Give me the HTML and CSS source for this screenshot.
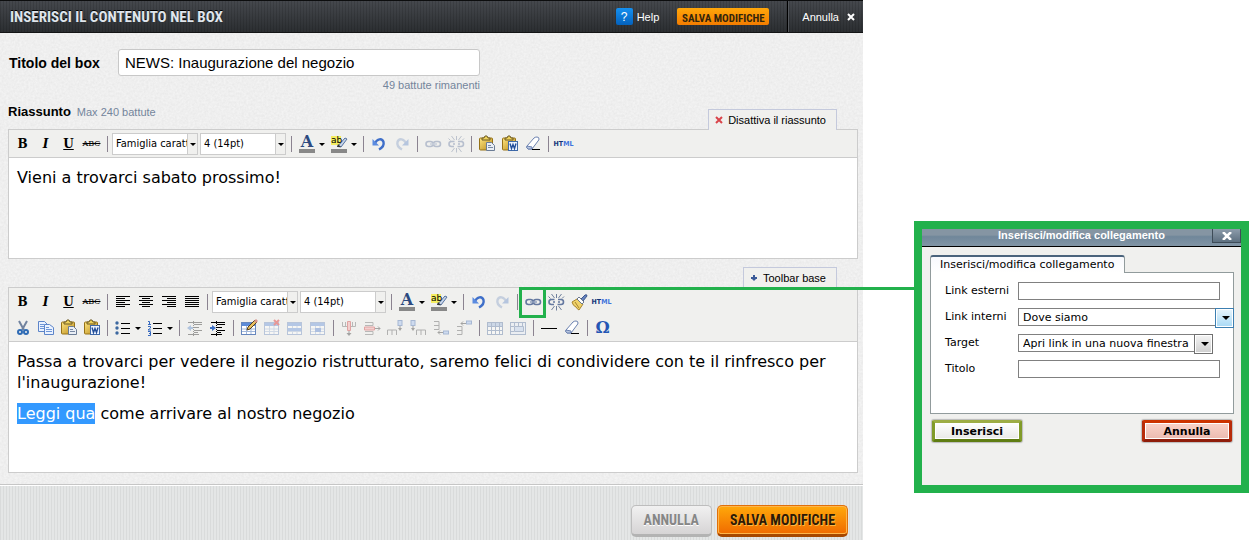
FILE: index.html
```html
<!DOCTYPE html>
<html lang="it">
<head>
<meta charset="utf-8">
<title>Inserisci il contenuto nel box</title>
<link rel="stylesheet" href="styles.css">
</head>
<body>
<svg class="sprite" aria-hidden="true">
  <defs>
    <linearGradient id="gold" x1="0" y1="0" x2="1" y2="1"><stop offset="0" stop-color="#ffe680"/><stop offset="1" stop-color="#b98a1c"/></linearGradient>
  </defs>
  <symbol id="i-lines-left" viewBox="0 0 20 20"><path d="M3 4.500h14M3 6.500h9M3 8.500h14M3 10.500h9M3 12.500h14M3 14.500h9" stroke="#000"/></symbol>
  <symbol id="i-lines-center" viewBox="0 0 20 20"><path d="M3 4.500h14M6 6.500h8M3 8.500h14M6 10.500h8M3 12.500h14M6 14.500h8" stroke="#000"/></symbol>
  <symbol id="i-lines-right" viewBox="0 0 20 20"><path d="M3 4.500h14M8 6.500h9M3 8.500h14M8 10.500h9M3 12.500h14M8 14.500h9" stroke="#000"/></symbol>
  <symbol id="i-lines-full" viewBox="0 0 20 20"><path d="M3 4.500h14M3 6.500h14M3 8.500h14M3 10.500h14M3 12.500h14M3 14.500h14" stroke="#000"/></symbol>
  <symbol id="i-pen" viewBox="0 0 20 20"><path d="M2 2h10v9H2z" fill="#f5ee62"/><path d="M8.500 12.500L16 4l2 1-6 8z" fill="#c8d4e8" stroke="#5573a0"/><path d="M8 13l1-3 3 3z" fill="#333"/><path d="M2 15h16v4H2z" fill="#888"/></symbol>
  <symbol id="i-undo" viewBox="0 0 20 20"><path d="M6 9C8 5 13 3.500 14.500 8c.8 3-1 5.500-4.500 7.500" fill="none" stroke="#3f6fc9" stroke-width="2.400"/><path d="M3.500 5v6.500H10z" fill="#5b8be0"/></symbol>
  <symbol id="i-redo" viewBox="0 0 20 20"><path d="M14 9C12 5 7 3.500 5.500 8c-.8 3 1 5.500 4.500 7.500" fill="none" stroke="#c5cfde" stroke-width="2.400"/><path d="M16.500 5v6.500H10z" fill="#b5c5de"/></symbol>
  <symbol id="i-link" viewBox="0 0 20 20"><g fill="none" stroke="#6478a0" stroke-width="1.600"><rect x="3" y="7.500" width="7" height="5" rx="2.500"/><rect x="10.500" y="7.500" width="7" height="5" rx="2.500"/></g><path d="M7 10h7" stroke="#8f9fbd" stroke-width="1.500"/></symbol>
  <symbol id="i-unlink" viewBox="0 0 20 20"><g fill="none" stroke="#6478a0" stroke-width="1.600"><path d="M8.500 7.500H5.500a2.500 2.500 0 0 0 0 5H8M7 10h2M12 7.500h3a2.500 2.500 0 0 1 0 5h-3.500M12 10h2"/></g><path d="M10.500 2v4M5.500 2l3 4M15.500 2l-3 4M2.500 4.500l2 2M18 4.500l-2 2M10.500 14v4.500M5.500 18l3-4M15.500 18l-3-4" stroke="#6f7f9c"/></symbol>
  <symbol id="i-paste" viewBox="0 0 20 20"><rect x="2.500" y="4" width="13" height="12" rx="1" fill="url(#gold)" stroke="#967217"/><path d="M5 6V4h2l1-2h2l1 2h2v2z" fill="#eed25b" stroke="#6c5a25"/><path d="M9.500 8.500h5l3 3v5h-8z" fill="#e9eef5" stroke="#6b7c95"/><path d="M11 11.500h3M11 13.500h5" stroke="#7889a3"/></symbol>
  <symbol id="i-word" viewBox="0 0 20 20"><rect x="2.500" y="4" width="13" height="12" rx="1" fill="url(#gold)" stroke="#967217"/><path d="M5 6V4h2l1-2h2l1 2h2v2z" fill="#eed25b" stroke="#6c5a25"/><rect x="8.500" y="7.500" width="9" height="9" fill="#edf4ff" stroke="#3f69a8"/><path d="M10 9.500l1.500 5 1.500-4 1.500 4 1.500-5" fill="none" stroke="#234f9a" stroke-width="1.400"/></symbol>
  <symbol id="i-eraser" viewBox="0 0 20 20"><path d="M4 12l7-8q1-1 3-1t2 2q0 1-1 2l-6 8H5q-2-1-1-3z" fill="#fff" stroke="#6c82b0"/><path d="M4 12l5 1v2H5q-2-1-1-3z" fill="#b8c6e0" stroke="#6c82b0"/><path d="M9 15.500h8" stroke="#000"/></symbol>
  <symbol id="i-cut" viewBox="0 0 20 20"><path d="M6 3l5 9M14 3l-5 9" stroke="#71839f" stroke-width="2"/><g fill="none" stroke="#2e6bb5" stroke-width="2"><circle cx="7" cy="14" r="2"/><circle cx="13" cy="14" r="2"/></g></symbol>
  <symbol id="i-copy" viewBox="0 0 20 20"><g fill="#eaf2ff" stroke="#5d85c9"><path d="M2.500 3.500h6l3 3v7h-9z"/><path d="M8.500 6.500h5l4 3v7h-9z"/></g><path d="M4 6.500h4M4 8.500h4M4 10.500h4M10 9.500h3M10 11.500h6M10 13.500h6" stroke="#6e96d7"/></symbol>
  <symbol id="i-bullets" viewBox="0 0 20 20"><path d="M8 5.500h9M8 10.500h9M8 15.500h9" stroke="#000"/><g fill="#3c689f"><circle cx="4" cy="5" r="1.700"/><circle cx="4" cy="10" r="1.700"/><circle cx="4" cy="15" r="1.700"/></g></symbol>
  <symbol id="i-numbers" viewBox="0 0 20 20"><path d="M8 5.500h9M8 10.500h9M8 15.500h9" stroke="#000"/><path d="M3 3.500h1.500v3M3 6.500h3M3 8.500h2.500v1.500L3 12h3M3 13.500h2.500v4H3M4 15.500h1.500" fill="none" stroke="#3568bf"/></symbol>
  <symbol id="i-indent" viewBox="0 0 20 20"><path d="M3 4.500h14M9 6.500h8M9 9.500h5M9 12.500h8M9 14.500h4M3 16.500h11" stroke="#000"/><path d="M8.500 3v15" stroke="#000" stroke-dasharray="1 1"/><path d="M4 7l4 3-4 3v-2H2V9h2z" fill="#3c6ec3"/></symbol>
  <symbol id="i-outdent" viewBox="0 0 20 20"><path d="M3 4.500h14M9 6.500h8M9 9.500h5M9 12.500h8M9 14.500h4M3 16.500h11" stroke="#222"/><path d="M8.500 3v15" stroke="#222" stroke-dasharray="1 1"/><path d="M6 7l-4 3 4 3v-2h2V9H6z" fill="#5283c8"/></symbol>
  <symbol id="i-table" viewBox="0 0 20 20"><rect x="2.500" y="4.500" width="14" height="12" fill="#fff" stroke="#6787bd"/><path d="M3 5h13v3H3z" fill="#5c8bd8"/><path d="M3 11h13M3 13.500h13M7.500 8v8M12 8v8" stroke="#a1b7da"/></symbol>
  <symbol id="i-table-edit" viewBox="0 0 20 20"><use href="#i-table"/><path d="M8 12l1-3 7-7 2 2-7 7z" fill="#e8c05f" stroke="#563f1e"/><path d="M15 3l2-2 2 2-2 2z" fill="#d69187"/></symbol>
  <symbol id="i-table-del" viewBox="0 0 20 20"><use href="#i-table"/><path d="M12 2l5 5M17 2l-5 5" stroke="#dc1717" stroke-width="2"/></symbol>
  <symbol id="i-row-props" viewBox="0 0 20 20"><use href="#i-table"/><path d="M3 10h13v3H3z" fill="#5c8bd8"/></symbol>
  <symbol id="i-cell-props" viewBox="0 0 20 20"><use href="#i-table"/><path d="M7 10h6v4H7z" fill="#4778cc"/></symbol>
  <symbol id="i-col-del" viewBox="0 0 20 20"><path d="M3.500 4v4.500H8M16.500 4v4.500H12M6.500 4v4M13.500 4v4" fill="none" stroke="#666"/><path d="M8.500 3.500h3v9h-3z" fill="#f8a0a0" stroke="#c33"/><path d="M10 13v4" stroke="#333"/><path d="M7.500 15h5L10 18z" fill="#333"/></symbol>
  <symbol id="i-row-del" viewBox="0 0 20 20"><path d="M3 4.500h8v3H3M3 16.500h8v-3H3" fill="none" stroke="#666"/><path d="M2.500 9h10v3h-10z" fill="#f8a0a0" stroke="#c33"/><path d="M13 10.500h5M16 8.500l2 2-2 2" fill="none" stroke="#333"/></symbol>
  <symbol id="i-cell-a" viewBox="0 0 20 20"><path d="M2.500 17v-5h9v5M7 12v5" fill="none" stroke="#555"/><rect x="13" y="2.500" width="4" height="5" fill="#9dbdf2" stroke="#3c67ad"/><path d="M15 8v3" stroke="#333"/><path d="M13 10h4l-2 3z" fill="#333"/></symbol>
  <symbol id="i-cell-b" viewBox="0 0 20 20"><path d="M8.500 17v-5h9v5M13 12v5" fill="none" stroke="#555"/><rect x="3" y="2.500" width="4" height="5" fill="#9dbdf2" stroke="#3c67ad"/><path d="M5 8v3" stroke="#333"/><path d="M3 10h4l-2 3z" fill="#333"/></symbol>
  <symbol id="i-cell-c" viewBox="0 0 20 20"><path d="M3 3.500h5v8H3M3 7.500h5" fill="none" stroke="#555"/><rect x="12.500" y="13" width="5" height="3" fill="#9dbdf2" stroke="#3c67ad"/><path d="M7 14.500h5M9 12.500l-2 2 2 2" fill="none" stroke="#333"/></symbol>
  <symbol id="i-cell-d" viewBox="0 0 20 20"><path d="M3 8.500h5v8H3M3 12.500h5" fill="none" stroke="#555"/><rect x="12.500" y="3" width="5" height="3" fill="#9dbdf2" stroke="#3c67ad"/><path d="M7 5.500h5M9 3.500l-2 2 2 2" fill="none" stroke="#333"/></symbol>
  <symbol id="i-split" viewBox="0 0 20 20"><rect x="2.500" y="4.500" width="15" height="12" fill="#fff" stroke="#53719f"/><path d="M3 5h14v3H3z" fill="#9bb5df"/><path d="M3 8.500h14M3 12.500h14M6.500 5v11M10.500 5v11M14.500 5v11" stroke="#53719f"/></symbol>
  <symbol id="i-merge" viewBox="0 0 20 20"><rect x="2.500" y="4.500" width="15" height="12" fill="#e4ecfa" stroke="#53719f"/><path d="M6.500 8.500h9v5h-9z" fill="#b6ccf0" stroke="#53719f"/><path d="M6.500 5v3M10.500 5v3M14.500 5v3M3 8.500h3M3 13.500h3" stroke="#53719f"/></symbol>
  <symbol id="i-rule" viewBox="0 0 20 20"><path d="M2 10.500h16" stroke="#000"/></symbol>
  <symbol id="i-brush" viewBox="0 0 20 20"><path d="M12 7l4-4q2-1 2 1l-4 5z" fill="#6683be" stroke="#3c578e"/><path d="M3 10l5-3 6 5-4 6q-2-1-3-3-3-1-4-5z" fill="#efd26a" stroke="#a8842d"/><path d="M8 7l2-2 5 5-2 2z" fill="#fff" stroke="#6c7890"/><path d="M6 10l4 6" stroke="#a8842d"/></symbol>
</svg>

<main class="page">
  <section class="panel">
    <header class="topbar">
      <h1 class="topbar-title">INSERISCI IL CONTENUTO NEL BOX</h1>
      <a class="help" href="#help"><span class="help-mark">?</span>Help</a>
      <button class="save-small" type="button">SALVA MODIFICHE</button>
      <button class="dismiss" type="button">Annulla
        <svg width="8" height="8" viewBox="0 0 8 8" aria-hidden="true"><path d="M1 1l6 6M7 1L1 7" stroke="#fff" stroke-width="2"/></svg>
      </button>
    </header>

    <form class="content">
      <div class="title-row">
        <label class="title-label" for="box-title">Titolo del box</label>
        <div class="title-field">
          <input class="title-input" id="box-title" type="text" value="NEWS: Inaugurazione del negozio">
          <p class="hint count">49 battute rimanenti</p>
        </div>
      </div>

      <div class="editor-head">
        <label class="section-label" for="summary">Riassunto</label>
        <span class="hint limit">Max 240 battute</span>
        <button class="tab" type="button">
          <svg width="8" height="8" viewBox="0 0 8 8" aria-hidden="true"><path d="M1 1l6 6M7 1L1 7" stroke="#d9444a" stroke-width="2"/></svg>
          Disattiva il riassunto
        </button>
      </div>

      <div class="editor">
        <div class="toolbar" role="toolbar" aria-label="Formattazione riassunto">
          <div class="tools">
            <button class="tool bold" type="button">B</button>
            <button class="tool italic" type="button">I</button>
            <button class="tool underline" type="button">U</button>
            <button class="tool strike" type="button">ABC</button>
            <i class="sep"></i>
            <span class="pick"><select aria-label="Famiglia carattere"><option>Famiglia caratt</option></select></span>
            <span class="pick"><select aria-label="Dimensione"><option>4 (14pt)</option></select></span>
            <i class="sep"></i>
            <button class="tool drop" type="button" aria-label="Colore testo"><span class="swatch letter">A</span></button>
            <button class="tool drop" type="button" aria-label="Evidenziatore"><span class="marker">ab<svg class="icon"><use href="#i-pen"/></svg></span></button>
            <i class="sep"></i>
            <button class="tool" type="button" aria-label="Annulla"><svg class="icon"><use href="#i-undo"/></svg></button>
            <button class="tool" type="button" aria-label="Ripeti"><svg class="icon"><use href="#i-redo"/></svg></button>
            <i class="sep"></i>
            <button class="tool off" type="button" aria-label="Link"><svg class="icon"><use href="#i-link"/></svg></button>
            <button class="tool off" type="button" aria-label="Rimuovi link"><svg class="icon"><use href="#i-unlink"/></svg></button>
            <i class="sep"></i>
            <button class="tool" type="button" aria-label="Incolla"><svg class="icon"><use href="#i-paste"/></svg></button>
            <button class="tool" type="button" aria-label="Incolla da Word"><svg class="icon"><use href="#i-word"/></svg></button>
            <button class="tool" type="button" aria-label="Cancella formattazione"><svg class="icon"><use href="#i-eraser"/></svg></button>
            <i class="sep"></i>
            <button class="tool html" type="button">HT<b>ML</b></button>
          </div>
        </div>
        <textarea class="copy short" id="summary">Vieni a trovarci sabato prossimo!</textarea>
      </div>

      <div class="editor-head second">
        <button class="tab" type="button">
          <svg width="8" height="8" viewBox="0 0 8 8" aria-hidden="true"><path d="M4 1v5M1 4h6" stroke="#3a5a98" stroke-width="2"/><path d="M2 5h4L4 7z" fill="#3a5a98"/></svg>
          Toolbar base
        </button>
      </div>

      <div class="editor">
        <div class="toolbar" role="toolbar" aria-label="Formattazione testo">
          <div class="tools">
            <button class="tool bold" type="button">B</button>
            <button class="tool italic" type="button">I</button>
            <button class="tool underline" type="button">U</button>
            <button class="tool strike" type="button">ABC</button>
            <i class="sep"></i>
            <button class="tool" type="button" aria-label="Allinea a sinistra"><svg class="icon"><use href="#i-lines-left"/></svg></button>
            <button class="tool" type="button" aria-label="Centra"><svg class="icon"><use href="#i-lines-center"/></svg></button>
            <button class="tool" type="button" aria-label="Allinea a destra"><svg class="icon"><use href="#i-lines-right"/></svg></button>
            <button class="tool" type="button" aria-label="Giustifica"><svg class="icon"><use href="#i-lines-full"/></svg></button>
            <i class="sep"></i>
            <span class="pick"><select aria-label="Famiglia carattere"><option>Famiglia caratt</option></select></span>
            <span class="pick"><select aria-label="Dimensione"><option>4 (14pt)</option></select></span>
            <i class="sep"></i>
            <button class="tool drop" type="button" aria-label="Colore testo"><span class="swatch letter">A</span></button>
            <button class="tool drop" type="button" aria-label="Evidenziatore"><span class="marker">ab<svg class="icon"><use href="#i-pen"/></svg></span></button>
            <i class="sep"></i>
            <button class="tool" type="button" aria-label="Annulla"><svg class="icon"><use href="#i-undo"/></svg></button>
            <button class="tool" type="button" aria-label="Ripeti"><svg class="icon"><use href="#i-redo"/></svg></button>
            <i class="sep"></i>
            <button class="tool picked" type="button" aria-label="Link"><svg class="icon"><use href="#i-link"/></svg></button>
            <button class="tool" type="button" aria-label="Rimuovi link"><svg class="icon"><use href="#i-unlink"/></svg></button>
            <button class="tool" type="button" aria-label="Pulisci codice"><svg class="icon"><use href="#i-brush"/></svg></button>
            <button class="tool html" type="button">HT<b>ML</b></button>
          </div>
          <div class="tools">
            <button class="tool" type="button" aria-label="Taglia"><svg class="icon"><use href="#i-cut"/></svg></button>
            <button class="tool" type="button" aria-label="Copia"><svg class="icon"><use href="#i-copy"/></svg></button>
            <button class="tool" type="button" aria-label="Incolla"><svg class="icon"><use href="#i-paste"/></svg></button>
            <button class="tool" type="button" aria-label="Incolla da Word"><svg class="icon"><use href="#i-word"/></svg></button>
            <i class="sep"></i>
            <button class="tool drop" type="button" aria-label="Elenco puntato"><svg class="icon"><use href="#i-bullets"/></svg></button>
            <button class="tool drop" type="button" aria-label="Elenco numerato"><svg class="icon"><use href="#i-numbers"/></svg></button>
            <i class="sep"></i>
            <button class="tool off" type="button" aria-label="Riduci rientro"><svg class="icon"><use href="#i-outdent"/></svg></button>
            <button class="tool" type="button" aria-label="Aumenta rientro"><svg class="icon"><use href="#i-indent"/></svg></button>
            <i class="sep"></i>
            <button class="tool" type="button" aria-label="Tabella"><svg class="icon"><use href="#i-table-edit"/></svg></button>
            <button class="tool off" type="button" aria-label="Elimina tabella"><svg class="icon"><use href="#i-table-del"/></svg></button>
            <button class="tool off" type="button" aria-label="Riga"><svg class="icon"><use href="#i-row-props"/></svg></button>
            <button class="tool off" type="button" aria-label="Cella"><svg class="icon"><use href="#i-cell-props"/></svg></button>
            <i class="sep"></i>
            <button class="tool off" type="button" aria-label="Elimina colonna"><svg class="icon"><use href="#i-col-del"/></svg></button>
            <button class="tool off" type="button" aria-label="Elimina riga"><svg class="icon"><use href="#i-row-del"/></svg></button>
            <button class="tool off" type="button" aria-label="Colonna dopo"><svg class="icon"><use href="#i-cell-a"/></svg></button>
            <button class="tool off" type="button" aria-label="Colonna prima"><svg class="icon"><use href="#i-cell-b"/></svg></button>
            <button class="tool off" type="button" aria-label="Riga dopo"><svg class="icon"><use href="#i-cell-c"/></svg></button>
            <button class="tool off" type="button" aria-label="Riga prima"><svg class="icon"><use href="#i-cell-d"/></svg></button>
            <i class="sep"></i>
            <button class="tool off" type="button" aria-label="Dividi celle"><svg class="icon"><use href="#i-split"/></svg></button>
            <button class="tool off" type="button" aria-label="Unisci celle"><svg class="icon"><use href="#i-merge"/></svg></button>
            <i class="sep"></i>
            <button class="tool" type="button" aria-label="Linea"><svg class="icon"><use href="#i-rule"/></svg></button>
            <button class="tool" type="button" aria-label="Cancella formattazione"><svg class="icon"><use href="#i-eraser"/></svg></button>
            <i class="sep"></i>
            <button class="tool omega" type="button">Ω</button>
          </div>
        </div>
        <div class="copy long" contenteditable="true" role="textbox" aria-multiline="true" aria-label="Testo">
          <p>Passa a trovarci per vedere il negozio ristrutturato, saremo felici di condividere con te il rinfresco per l'inaugurazione!</p>
          <p><span class="selected">Leggi qua</span> come arrivare al nostro negozio</p>
        </div>
      </div>
    </form>

    <footer class="actions">
      <button class="action cancel" type="button">ANNULLA</button>
      <button class="action save" type="button">SALVA MODIFICHE</button>
    </footer>
  </section>

  <section class="dialog" role="dialog" aria-labelledby="dialog-title">
    <header class="dialog-bar">
      <h2 class="dialog-title" id="dialog-title">Inserisci/modifica collegamento</h2>
      <button class="dialog-close" type="button" aria-label="Chiudi">
        <svg width="10" height="8" viewBox="0 0 10 8" aria-hidden="true"><path d="M1 0l8 8M9 0L1 8" stroke="#fff" stroke-width="2.500"/></svg>
      </button>
    </header>
    <form class="dialog-body">
      <button class="dialog-tab" type="button">Inserisci/modifica collegamento</button>
      <div class="fields">
        <label for="ext">Link esterni</label>
        <input class="field" id="ext" type="text">
        <label for="int">Link interni</label>
        <span class="choice wide active"><select id="int"><option>Dove siamo</option></select></span>
        <label for="target">Target</label>
        <span class="choice"><select id="target"><option>Apri link in una nuova finestra</option></select></span>
        <label for="link-title">Titolo</label>
        <input class="field" id="link-title" type="text">
      </div>
      <div class="dialog-actions">
        <button class="skin insert" type="button">Inserisci</button>
        <button class="skin abort" type="button">Annulla</button>
      </div>
    </form>
  </section>
  <div class="connector"></div>
</main>
</body>
</html>
```
FILE: styles.css
```css
* { box-sizing: border-box; }

body {
  margin: 0;
  background: #fff;
  color: #000;
  font: 11px/14px "Liberation Sans", Arial, sans-serif;
}

h1, h2, p { margin: 0; }

button, input, select, textarea {
  margin: 0;
  padding: 0;
  border: 0;
  border-radius: 0;
  background: none;
  color: inherit;
  font: inherit;
}

.sprite { position: absolute; width: 0; height: 0; }

.page {
  position: relative;
  display: grid;
  grid-template-columns: minmax(0, 1fr) 335px;
  column-gap: 51px;
  align-items: start;
  padding-right: 7px;
}

.panel {
  background: #f3f3f3 url("data:image/svg+xml,%3Csvg xmlns='http://www.w3.org/2000/svg' width='120' height='120'%3E%3Cfilter id='n'%3E%3CfeTurbulence type='fractalNoise' baseFrequency='.45' numOctaves='2' stitchTiles='stitch'/%3E%3CfeColorMatrix values='0 0 0 0 0 0 0 0 0 0 0 0 0 0 0 .2 0 0 0 -.05'/%3E%3C/filter%3E%3Crect width='120' height='120' filter='url(%23n)' opacity='.3'/%3E%3C/svg%3E");
}

/* Top bar */
.topbar {
  display: flex;
  align-items: center;
  height: 33px;
  padding-left: 10px;
  border-top: 1px solid #0c0d0e;
  border-bottom: 1px solid #141516;
  background:
    repeating-linear-gradient(90deg, rgba(0, 0, 0, .12) 0 1px, transparent 1px 3px),
    linear-gradient(#45484d, #2b2e31);
  color: #fff;
}

.topbar-title {
  flex: 1;
  color: #dfe5ec;
  font: bold 15px/20px "Liberation Sans Narrow", "Roboto Condensed", sans-serif;
  text-shadow: 0 -1px 0 #000;
}

.help {
  display: flex;
  align-items: center;
  gap: 4px;
  margin-right: 18px;
  color: #fff;
  text-decoration: none;
}

.help-mark {
  width: 17px;
  height: 17px;
  border-radius: 2px;
  background: linear-gradient(#1590f0, #0462bd);
  font-size: 12px;
  line-height: 18px;
  text-align: center;
}

.save-small {
  width: 92px;
  height: 17px;
  margin-right: 18px;
  padding-top: 4px;
  overflow: hidden;
  border-radius: 2px;
  background: linear-gradient(#ffa70a, #f37c00);
  color: #33250c;
  font: bold 11px/13px "Liberation Sans Narrow", "Roboto Condensed", sans-serif;
  white-space: nowrap;
}

.dismiss {
  display: flex;
  align-items: center;
  gap: 8px;
  height: 31px;
  padding: 0 8px 0 14px;
  border-left: 1px solid #000;
  box-shadow: inset 1px 0 0 #54575c;
}

/* Title and labels */
.content { padding: 16px 5px 11px 8px; }

.title-row { display: flex; }

.title-label {
  width: 110px;
  padding-left: 1px;
  font-size: 14px;
  font-weight: bold;
  line-height: 28px;
}

.title-field { width: 362px; }

.title-input {
  display: block;
  width: 100%;
  height: 27px;
  padding: 0 6px;
  border: 1px solid #c8c8c8;
  border-radius: 3px;
  background: #fff;
  font-size: 15px;
}

.hint { color: #74859c; }
.count { margin-top: 2px; text-align: right; }

.editor-head {
  display: flex;
  align-items: flex-start;
  height: 25px;
  margin-top: 12px;
  padding-right: 21px;
}

.editor-head.second { height: 28px; margin-top: 0; }

.section-label { font-size: 13px; font-weight: bold; line-height: 16px; }
.limit { margin-left: 6px; line-height: 17px; }

.tab {
  position: relative;
  z-index: 1;
  display: flex;
  align-items: center;
  align-self: flex-end;
  gap: 5px;
  height: 21px;
  margin: 0 0 -1px auto;
  padding: 0 10px 0 6px;
  border: 1px solid #c4c9dc;
  border-bottom: 0;
  background: #f0f0ee;
}

/* Editors */
.editor { border: 1px solid #ccc; background: #fff; }

.toolbar {
  display: grid;
  row-gap: 4px;
  padding: 3px 2px 2px;
  border-bottom: 1px solid #ccc;
  background: #f0f0ee;
}

.tools { display: flex; align-items: center; height: 22px; }

.tool {
  position: relative;
  display: flex;
  flex: none;
  align-items: center;
  justify-content: center;
  width: 23px;
  height: 22px;
}

.icon { width: 20px; height: 20px; }
.off { opacity: .4; }

.bold, .italic, .underline {
  font: bold 12px/22px "DejaVu Serif", serif;
}
.italic { font-style: italic; }
.underline { text-decoration: underline; }
.strike { font: 8px/22px "DejaVu Serif", serif; text-decoration: line-through; }
.omega { color: #2456b4; font: bold 16px/22px "DejaVu Serif", serif; }
.html { color: #15357a; font: bold 7px/22px "DejaVu Sans Condensed", sans-serif; }
.html b { color: #3f74dc; }

.sep {
  flex: none;
  width: 1px;
  height: 16px;
  margin: 0 3px 0 4px;
  background: #8b8390;
}

.drop { justify-content: flex-start; width: 32px; padding-left: 2px; }

.drop::after {
  margin-left: 2px;
  border: 3px solid transparent;
  border-top-color: #000;
  border-bottom: 0;
  content: "";
}

.swatch {
  width: 16px;
  height: 17px;
  margin: 0 2px;
  border-bottom: 4px solid #888;
}

.letter {
  color: #2c4a80;
  font: bold 16px/12px "DejaVu Serif", serif;
}

.marker {
  position: relative;
  width: 20px;
  height: 20px;
  padding-left: 2px;
  font: 9px/12px "DejaVu Sans", sans-serif;
  text-align: left;
  isolation: isolate;
}

.marker .icon { position: absolute; z-index: -1; inset: 0; }

.pick {
  position: relative;
  width: 86px;
  height: 22px;
  margin: 0 1px;
}

.pick select {
  width: 100%;
  height: 22px;
  padding: 0 10px 0 3px;
  overflow: hidden;
  border: 1px solid #ccc;
  appearance: none;
  background: linear-gradient(#ccc, #ccc) right 9px top / 1px 100% no-repeat, linear-gradient(#f0f0ee, #f0f0ee) right / 9px 100% no-repeat, #fff;
  font: 11px/20px "DejaVu Sans Condensed", Tahoma, sans-serif;
}

.pick::after {
  position: absolute;
  top: 10px;
  right: 2px;
  border: 3px solid transparent;
  border-top-color: #000;
  border-bottom: 0;
  content: "";
  pointer-events: none;
}

.picked::after {
  position: absolute;
  inset: -4px -2px -5px;
  border: 3px solid #22b14c;
  content: "";
}

.copy {
  display: block;
  width: 100%;
  padding: 9px 8px;
  font: 16px/21px "DejaVu Sans", Verdana, sans-serif;
  resize: none;
  outline: 0;
}

.short { height: 100px; }
.long { min-height: 130px; }
.long p + p { margin-top: 10px; }

.selected { display: inline-block; background: #39f; color: #fff; }

/* Footer */
.actions {
  display: flex;
  justify-content: flex-end;
  gap: 5px;
  padding: 20px 15px 3px;
  border-top: 1px solid #c6c6c6;
  box-shadow: inset 0 1px 0 #fff;
  background: repeating-linear-gradient(90deg, #d9dbdb 0 1px, #e4e6e6 1px 3px);
}

.action {
  height: 32px;
  padding: 0 12px;
  border: 1px solid;
  border-bottom-width: 3px;
  border-radius: 5px;
  font: bold 14px/28px "Liberation Sans Narrow", "Roboto Condensed", sans-serif;
}

.cancel {
  border-color: #bdbdbd #bdbdbd #b3b3b3;
  background: linear-gradient(#f1f1f1, #d6d4d5);
  color: #868686;
  text-shadow: 0 1px 0 #fff;
}

.save {
  border-color: #e0700a #e0700a #a64700;
  background: linear-gradient(#ffa90a, #f06a00);
  box-shadow: inset 0 0 0 1px #ffb54a;
  color: #2d1a04;
  text-shadow: 1px 1px 0 #ffb640;
}

/* Link dialog */
.dialog {
  margin-top: 221px;
  border: 8px solid #22b14c;
  background: #f0f0ee;
}

.dialog-bar {
  position: relative;
  height: 18px;
  border-bottom: 1px solid #000;
  background: linear-gradient(#8595a3 0 35%, #70879a 45%, #8195a5);
}

.dialog-title {
  color: #fff;
  font-size: 11px;
  line-height: 13px;
  text-align: center;
}

.dialog-close {
  position: absolute;
  top: 0;
  right: 0;
  display: flex;
  align-items: center;
  justify-content: center;
  width: 29px;
  height: 14px;
  border: 1px solid #3e4c58;
  border-top: 0;
  background: linear-gradient(#8d9cab, #5d7080);
}

.dialog-body {
  padding: 8px 7px 43px 8px;
  font: 11px/18px "DejaVu Sans", Verdana, sans-serif;
}

.dialog-tab {
  position: relative;
  display: block;
  height: 18px;
  margin-bottom: -1px;
  padding: 0 10px 0 9px;
  border: 1px solid #919b9c;
  border-top: 2px solid #4a637c;
  border-bottom: 0;
  border-radius: 3px 3px 0 0;
  background: linear-gradient(#f8f9fd, #fff);
  line-height: 16px;
}

.fields {
  display: grid;
  grid-template-columns: 73px minmax(0, 1fr);
  row-gap: 8px;
  align-content: start;
  min-height: 142px;
  padding: 9px 0 0 14px;
  border: 1px solid #919b9c;
  background: #fff;
}

.fields label { line-height: 18px; }

.field {
  width: 202px;
  height: 18px;
  padding: 0 4px;
  border: 1px solid #808080;
  background: #fff;
}

.choice { position: relative; width: 195px; height: 18px; }
.wide { width: auto; margin-right: -1px; }

.choice select {
  display: block;
  width: 100%;
  height: 18px;
  padding: 1px 17px 0 4px;
  border: 1px solid #808080;
  appearance: none;
  background: #fff;
  line-height: 16px;
}

.choice::before {
  position: absolute;
  top: 0;
  right: 0;
  width: 17px;
  height: 18px;
  border: 1px solid #707070;
  background: linear-gradient(#f4f4f4, #cfcfcf);
  box-shadow: inset 0 0 0 1px #fff;
  content: "";
  pointer-events: none;
}

.active::before { border-color: #3c7fb1; background: linear-gradient(#e8f5fc, #a7d9f5); }

.choice::after {
  position: absolute;
  top: 8px;
  right: 4px;
  border: 4px solid transparent;
  border-top-color: #000;
  border-bottom: 0;
  content: "";
  pointer-events: none;
}

.dialog-actions {
  display: flex;
  justify-content: space-between;
  padding: 6px 2px 0;
}

.skin {
  width: 90px;
  height: 22px;
  padding-top: 1px;
  border: 3px solid;
  border-radius: 2px;
  font-weight: bold;
  line-height: 15px;
  box-shadow: inset 0 0 0 1px #fff, 0 0 1px 1px #bbb;
}

.insert { border-color: #9dad45 #819b29 #5f7d12; background: linear-gradient(#fff, #e9e9e7); }
.abort { border-color: #cc3300 #b82c0a #8f1d0a; background: linear-gradient(#fad3c9, #ecbab0); }

/* Line joining the highlighted link tool to its dialog */
.connector {
  position: absolute;
  z-index: 2;
  top: 287px;
  right: 342px;
  left: 546px;
  height: 3px;
  background: #22b14c;
}
```
